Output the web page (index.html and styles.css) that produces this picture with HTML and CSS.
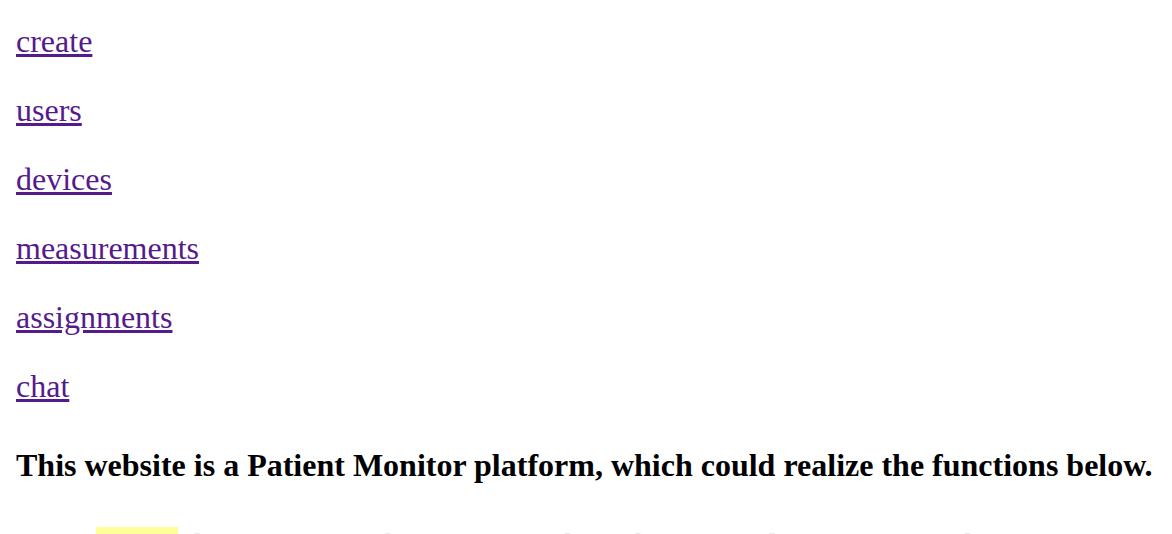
FILE: index.html
```html
<!DOCTYPE html>
<html>
<head>
<meta charset="utf-8">
<link rel="stylesheet" href="styles.css">
</head>
<body>
<div class="page">
  <nav class="nav">
    <p class="nav-item"><a class="link" href="#create">create</a></p>
    <p class="nav-item"><a class="link" href="#users">users</a></p>
    <p class="nav-item"><a class="link" href="#devices">devices</a></p>
    <p class="nav-item"><a class="link" href="#measurements">measurements</a></p>
    <p class="nav-item"><a class="link" href="#assignments">assignments</a></p>
    <p class="nav-item"><a class="link" href="#chat">chat</a></p>
  </nav>
  <h3 class="intro">This website is a Patient Monitor platform, which could realize the functions below.</h3>
  <ul class="features">
    <li class="feature"><mark class="hl">sensor</mark> <span class="desc">data is collected from the medical devices and shown to the doctors, with alerts.</span></li>
  </ul>
</div>
</body>
</html>
```

FILE: styles.css
```css
html, body {
  margin: 0;
  padding: 0;
  background: #fff;
}
.page {
  padding: 23px 16px 0;
  font-family: "Liberation Serif", "Times New Roman", serif;
  font-size: 32px;
  color: #000;
}
.nav-item {
  margin: 32px 0;
  line-height: normal;
}
.nav-item:first-child {
  margin-top: 0;
}
.link {
  color: #551a8b;
  text-decoration: underline;
  text-underline-offset: 2px;
}
.intro {
  font-size: 32px;
  font-weight: bold;
  line-height: normal;
  margin: 42px 0 43px;
  white-space: nowrap;
}
.features {
  margin: 0;
  padding-left: 80px;
  list-style: none;
}
.feature {
  line-height: normal;
}
.hl {
  background: #ffff99;
  color: #fff;
}
.desc {
  color: #d8d8d8;
}
```
